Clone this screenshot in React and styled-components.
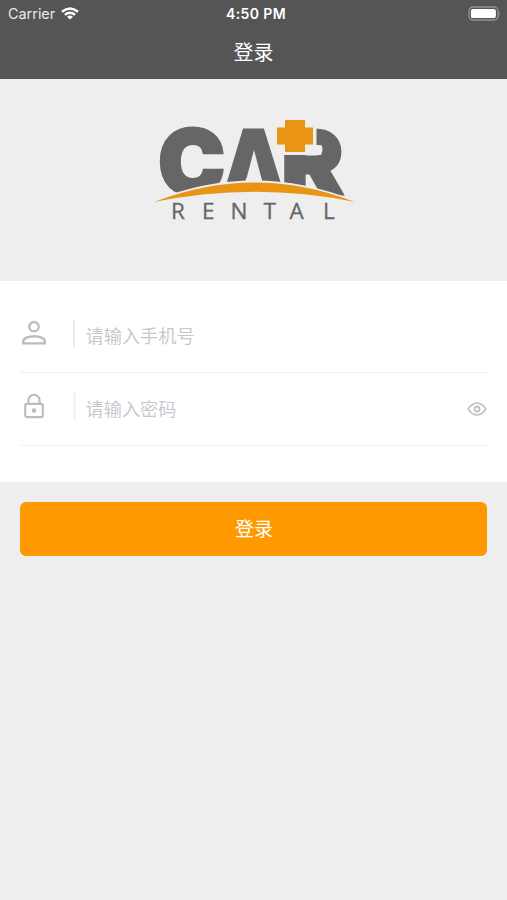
import React, { useState } from 'react'
import styled, { createGlobalStyle } from 'styled-components'

const Login = () => {
    const [phone, setPhone] = useState('')
    const [password, setPassword] = useState('')
    const [visible, setVisible] = useState(false)

    return (
        <Page>
            <GlobalStyle />
            <Header>
                <StatusBar>
                    <Carrier>Carrier <WifiIcon /></Carrier>
                    <Time>4:50 PM</Time>
                    <BatteryIcon />
                </StatusBar>
                <Title>登录</Title>
            </Header>
            <Banner>
                <Logo />
            </Banner>
            <Form>
                <Row>
                    <IconBox><PersonIcon /></IconBox>
                    <Separator />
                    <Input placeholder="请输入手机号" value={phone} onChange={(e) => setPhone(e.target.value)} />
                </Row>
                <Row>
                    <IconBox><LockIcon /></IconBox>
                    <Separator wide />
                    <Input
                        type={visible ? 'text' : 'password'}
                        placeholder="请输入密码"
                        value={password}
                        onChange={(e) => setPassword(e.target.value)}
                    />
                    <EyeButton onClick={() => setVisible(!visible)}><EyeIcon /></EyeButton>
                </Row>
            </Form>
            <Button>登录</Button>
        </Page>
    )
}

const WifiIcon = () => (
    <svg width="18" height="13" viewBox="0 0 18 13" fill="none" stroke="#fff" strokeWidth="2.5">
        <path d="M1 4.8 Q9 -1.9 17 4.8" />
        <path d="M3.9 7.9 Q9 3.7 14.1 7.9" />
        <path d="M9 12.5 L6 9.7 Q9 7.5 12 9.7 Z" fill="#fff" stroke="none" />
    </svg>
)

const BatteryIcon = () => (
    <svg width="33" height="15" viewBox="0 0 33 15">
        <rect x="1" y="1" width="29" height="13" rx="4" fill="none" stroke="#939393" strokeWidth="1.3" />
        <rect x="2.9" y="2.9" width="25" height="9.2" rx="2.2" fill="#fff" />
        <path d="M31 5.2 Q32.6 7.5 31 9.8 Z" fill="#939393" />
    </svg>
)

const PersonIcon = () => (
    <svg width="26" height="26" viewBox="0 0 26 26" fill="none" stroke="#bdbdbd" strokeWidth="2.4">
        <circle cx="13" cy="6.7" r="4.7" />
        <path d="M2.2 23.4 V21.3 C2.2 18.3 7.5 16.2 13 16.2 S23.8 18.3 23.8 21.3 V23.4 Z" strokeLinejoin="round" />
    </svg>
)

const LockIcon = () => (
    <svg width="26" height="26" viewBox="0 0 26 26" fill="none" stroke="#bdbdbd" strokeWidth="2.1">
        <rect x="4.2" y="10.9" width="17.6" height="13.2" rx="1.8" />
        <path d="M7.4 10.9 V7.4 A5.6 5.6 0 0 1 18.6 7.4 V10.9" />
        <circle cx="13" cy="17.5" r="2.3" fill="#bdbdbd" stroke="none" />
    </svg>
)

const EyeIcon = () => (
    <svg width="20" height="14" viewBox="0 0 20 14" fill="none" stroke="#c0c3c7" strokeWidth="1.7">
        <path d="M1.2 7 Q5 1.1 10 1.1 T18.8 7 Q15 12.9 10 12.9 T1.2 7 Z" />
        <circle cx="10" cy="7" r="2.5" strokeWidth="1.8" />
    </svg>
)

const Logo = () => (
    <svg width="210" height="140" viewBox="0 -20 210 140">
        <g fill="#666" stroke="#666" strokeWidth="3" fontFamily="Inter" fontWeight="900">
            <text transform="translate(8.3 84) scale(.99 1)" fontSize="90">C</text>
            <text transform="translate(76 75) scale(.92 1)" fontSize="76">A</text>
            <text transform="translate(131.5 84) scale(1.05 1)" fontSize="88">R</text>
        </g>
        {/* the A has an open wedge in place of its crossbar */}
        <path d="M98 26 H110 L119 68 H89 Z" fill="#666" />
        <path d="M104 40 L94.5 76 H113.5 Z" fill="#eee" />
        {/* gap round the cross */}
        <path d="M130 8 H166.5 V35 H171 Q174 38 171 45 H130 Z" fill="#eee" />
        <path d="M135 45.5 H173 V52 H135 Z" fill="#666" />
        <path d="M135 10 H155 V17.5 H163 V34.5 H155 V42 H135 V34.5 H127 V17.5 H135 Z" fill="#e99415" />
        <path d="M0 92 L4 92 Q105 52 204 92 V120 H0 Z" fill="#eee" stroke="#eee" strokeWidth="3" />
        <path d="M4 92 Q105 53 205 92 Q105 71.5 4 92 Z" fill="#e99415" />
        <text
            x="21 52 80.5 113.5 139.5 173"
            y="108.5"
            fontFamily="Open Sans"
            fontSize="22.5"
            fill="#666"
            stroke="#666"
            strokeWidth=".3"
        >
            RENTAL
        </text>
    </svg>
)

const GlobalStyle = createGlobalStyle`
    * {
        box-sizing: border-box;
    }
    body {
        margin: 0;
        background: #eee;
        font-family: Inter, "Noto Sans CJK SC", sans-serif;
    }
`
const Page = styled.div`
    min-height: 900px;
    background: #eee;
`
const Header = styled.div`
    height: 79px;
    background: #555;
    color: #fff;
`
const StatusBar = styled.div`
    display: grid;
    grid-template-columns: 1fr auto 1fr;
    align-items: center;
    height: 27px;
    padding: 0 6px 0 8px;
    & > svg {
        justify-self: end;
    }
`
const Carrier = styled.div`
    display: flex;
    align-items: center;
    gap: 6px;
    font-size: 14.4px;
    color: #e9e9e9;
`
const Time = styled.div`
    font-size: 14px;
    font-weight: 600;
    letter-spacing: 0.4px;
    padding-left: 3px;
`
const Title = styled.div`
    font-family: "Noto Sans CJK SC", sans-serif;
    font-size: 20px;
    line-height: 50px;
    text-align: center;
`
const Banner = styled.div`
    display: flex;
    justify-content: center;
    height: 202px;
    padding-top: 11px;
    padding-left: 3px;
`
const Form = styled.div`
    height: 201px;
    padding: 19px 19px 0 20px;
    background: #fff;
`
const Row = styled.div`
    display: flex;
    align-items: center;
    height: 73px;
    border-bottom: 1px solid #f1f1f1;
    padding-bottom: 6px;
`
const IconBox = styled.div`
    display: flex;
    width: 53px;
    padding-left: 1px;
`
const Separator = styled.div`
    width: ${props => props.wide ? '3px' : '2px'};
    height: 27px;
    margin-right: ${props => props.wide ? '9px' : '10px'};
    background: ${props => props.wide ? '#f3f3f3' : '#ececec'};
`
const Input = styled.input`
    flex: 1;
    min-width: 0;
    padding: 4px 0 0 0.5px;
    border: none;
    outline: none;
    background: transparent;
    font-family: "Noto Sans CJK SC", sans-serif;
    font-size: 18.2px;
    font-weight: 350;
    color: #555;
    &::placeholder {
        color: #c3c6cc;
    }
`
const EyeButton = styled.button`
    display: flex;
    padding: 6px 0 0;
    margin-right: 1px;
    border: none;
    background: transparent;
    cursor: pointer;
`
const Button = styled.button`
    display: block;
    width: calc(100% - 40px);
    height: 54px;
    margin: 20px 20px 0;
    padding: 0 0 3px 1px;
    border: none;
    border-radius: 6px;
    background: #ff9900;
    color: #fff;
    font-family: "Noto Sans CJK SC", sans-serif;
    font-size: 19px;
    cursor: pointer;
`

export default Login
